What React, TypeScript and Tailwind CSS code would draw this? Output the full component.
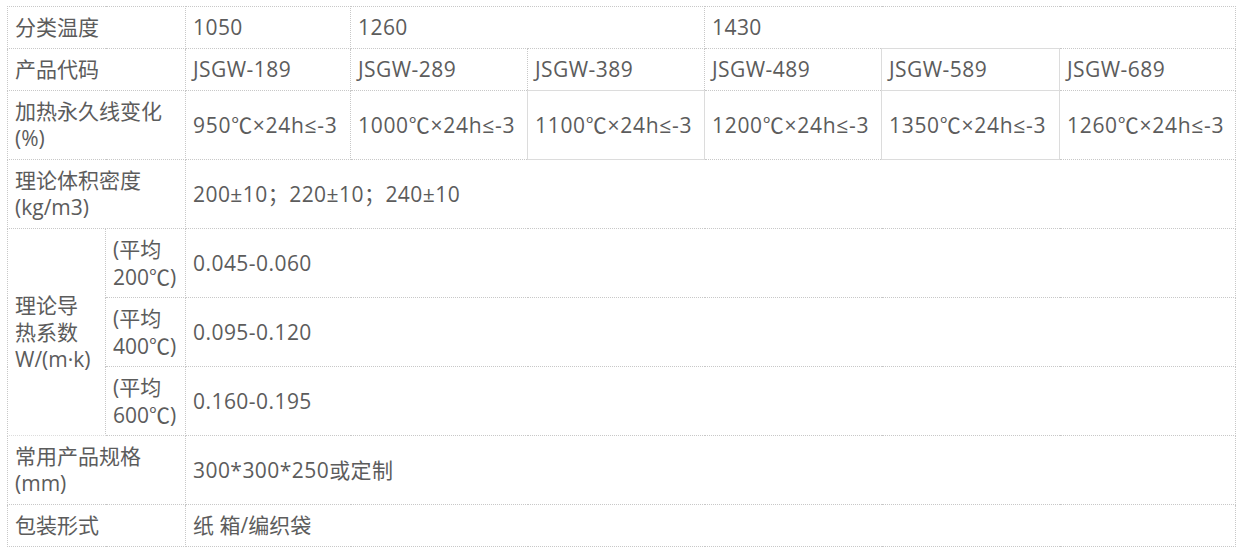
import type { ReactNode } from "react";

const cell = "border border-dotted border-[#c8c8c8] px-[7px] align-middle";
const solid = "border border-solid border-[#dcdcdc] px-[7px] align-middle";
const num = " tracking-[0.45px]";

const codes = ["JSGW-189", "JSGW-289", "JSGW-389", "JSGW-489", "JSGW-589", "JSGW-689"];
const changes = ["950", "1000", "1100", "1200", "1350", "1260"];

// the degree sign reads better from the CJK face
function Deg() {
  return <span style={{ fontFamily: '"Noto Sans CJK SC", sans-serif' }}>℃</span>;
}

function Avg({ t }: { t: string }): ReactNode {
  return (
    <>
      (平均
      <br />
      {t}
      <Deg />)
    </>
  );
}

export default function App() {
  return (
    <div
      className="bg-white min-h-screen pt-[6px] pl-[7px] text-[#5c5c5c] text-[21px] leading-[27px]"
      style={{ fontFamily: '"Open Sans", "Noto Sans CJK SC", sans-serif' }}
    >
      <table className="table-fixed border-collapse w-[1228px]">
        <colgroup>
          <col className="w-[98px]" />
          <col className="w-[80px]" />
          <col className="w-[165px]" />
          <col className="w-[177px]" />
          <col className="w-[177px]" />
          <col className="w-[177px]" />
          <col className="w-[178px]" />
          <col className="w-[176px]" />
        </colgroup>
        <tbody>
          <tr className="h-[42px]">
            <td colSpan={2} className={cell}>分类温度</td>
            <td className={cell + num}>1050</td>
            <td colSpan={2} className={cell + num}>1260</td>
            <td colSpan={3} className={cell + num}>1430</td>
          </tr>
          <tr className="h-[42px]">
            <td colSpan={2} className={cell}>产品代码</td>
            {codes.map((c, i) => (
              <td key={c} className={(i === 4 ? solid : cell) + num}>
                {c}
              </td>
            ))}
          </tr>
          <tr className="h-[69px]">
            <td colSpan={2} className={cell}>
              加热永久线变化
              <br />
              (%)
            </td>
            {changes.map((c, i) => (
              <td
                key={c}
                className={(i === 2 || i === 4 ? solid : cell) + " whitespace-nowrap pr-0 tracking-[0.7px]"}
              >
                {c}
                <Deg />
                ×24h≤-3
              </td>
            ))}
          </tr>
          <tr className="h-[69px]">
            <td colSpan={2} className={cell}>
              理论体积密度
              <br />
              (kg/m3)
            </td>
            <td colSpan={6} className={cell + num}>200±10；220±10；240±10</td>
          </tr>
          <tr className="h-[69px]">
            <td rowSpan={3} className={cell + " border-b-solid border-b-[#dcdcdc]"}>
              理论导
              <br />
              热系数
              <br />
              W/(m·k)
            </td>
            <td className={cell + " pr-0"}>
              <Avg t="200" />
            </td>
            <td colSpan={6} className={cell + num}>0.045-0.060</td>
          </tr>
          <tr className="h-[69px]">
            <td className="border border-dotted border-l-solid border-[#c8c8c8] border-l-[#dcdcdc] pl-[7px] align-middle">
              <Avg t="400" />
            </td>
            <td colSpan={6} className={cell + num}>0.095-0.120</td>
          </tr>
          <tr className="h-[69px]">
            <td className={cell + " pr-0"}>
              <Avg t="600" />
            </td>
            <td colSpan={6} className={cell + num}>0.160-0.195</td>
          </tr>
          <tr className="h-[69px]">
            <td colSpan={2} className={cell}>
              常用产品规格
              <br />
              (mm)
            </td>
            <td colSpan={6} className={cell + num}>300*300*250或定制</td>
          </tr>
          <tr className="h-[42px]">
            <td colSpan={2} className={cell}>包装形式</td>
            <td colSpan={6} className={cell}>纸 箱/编织袋</td>
          </tr>
        </tbody>
      </table>
    </div>
  );
}
